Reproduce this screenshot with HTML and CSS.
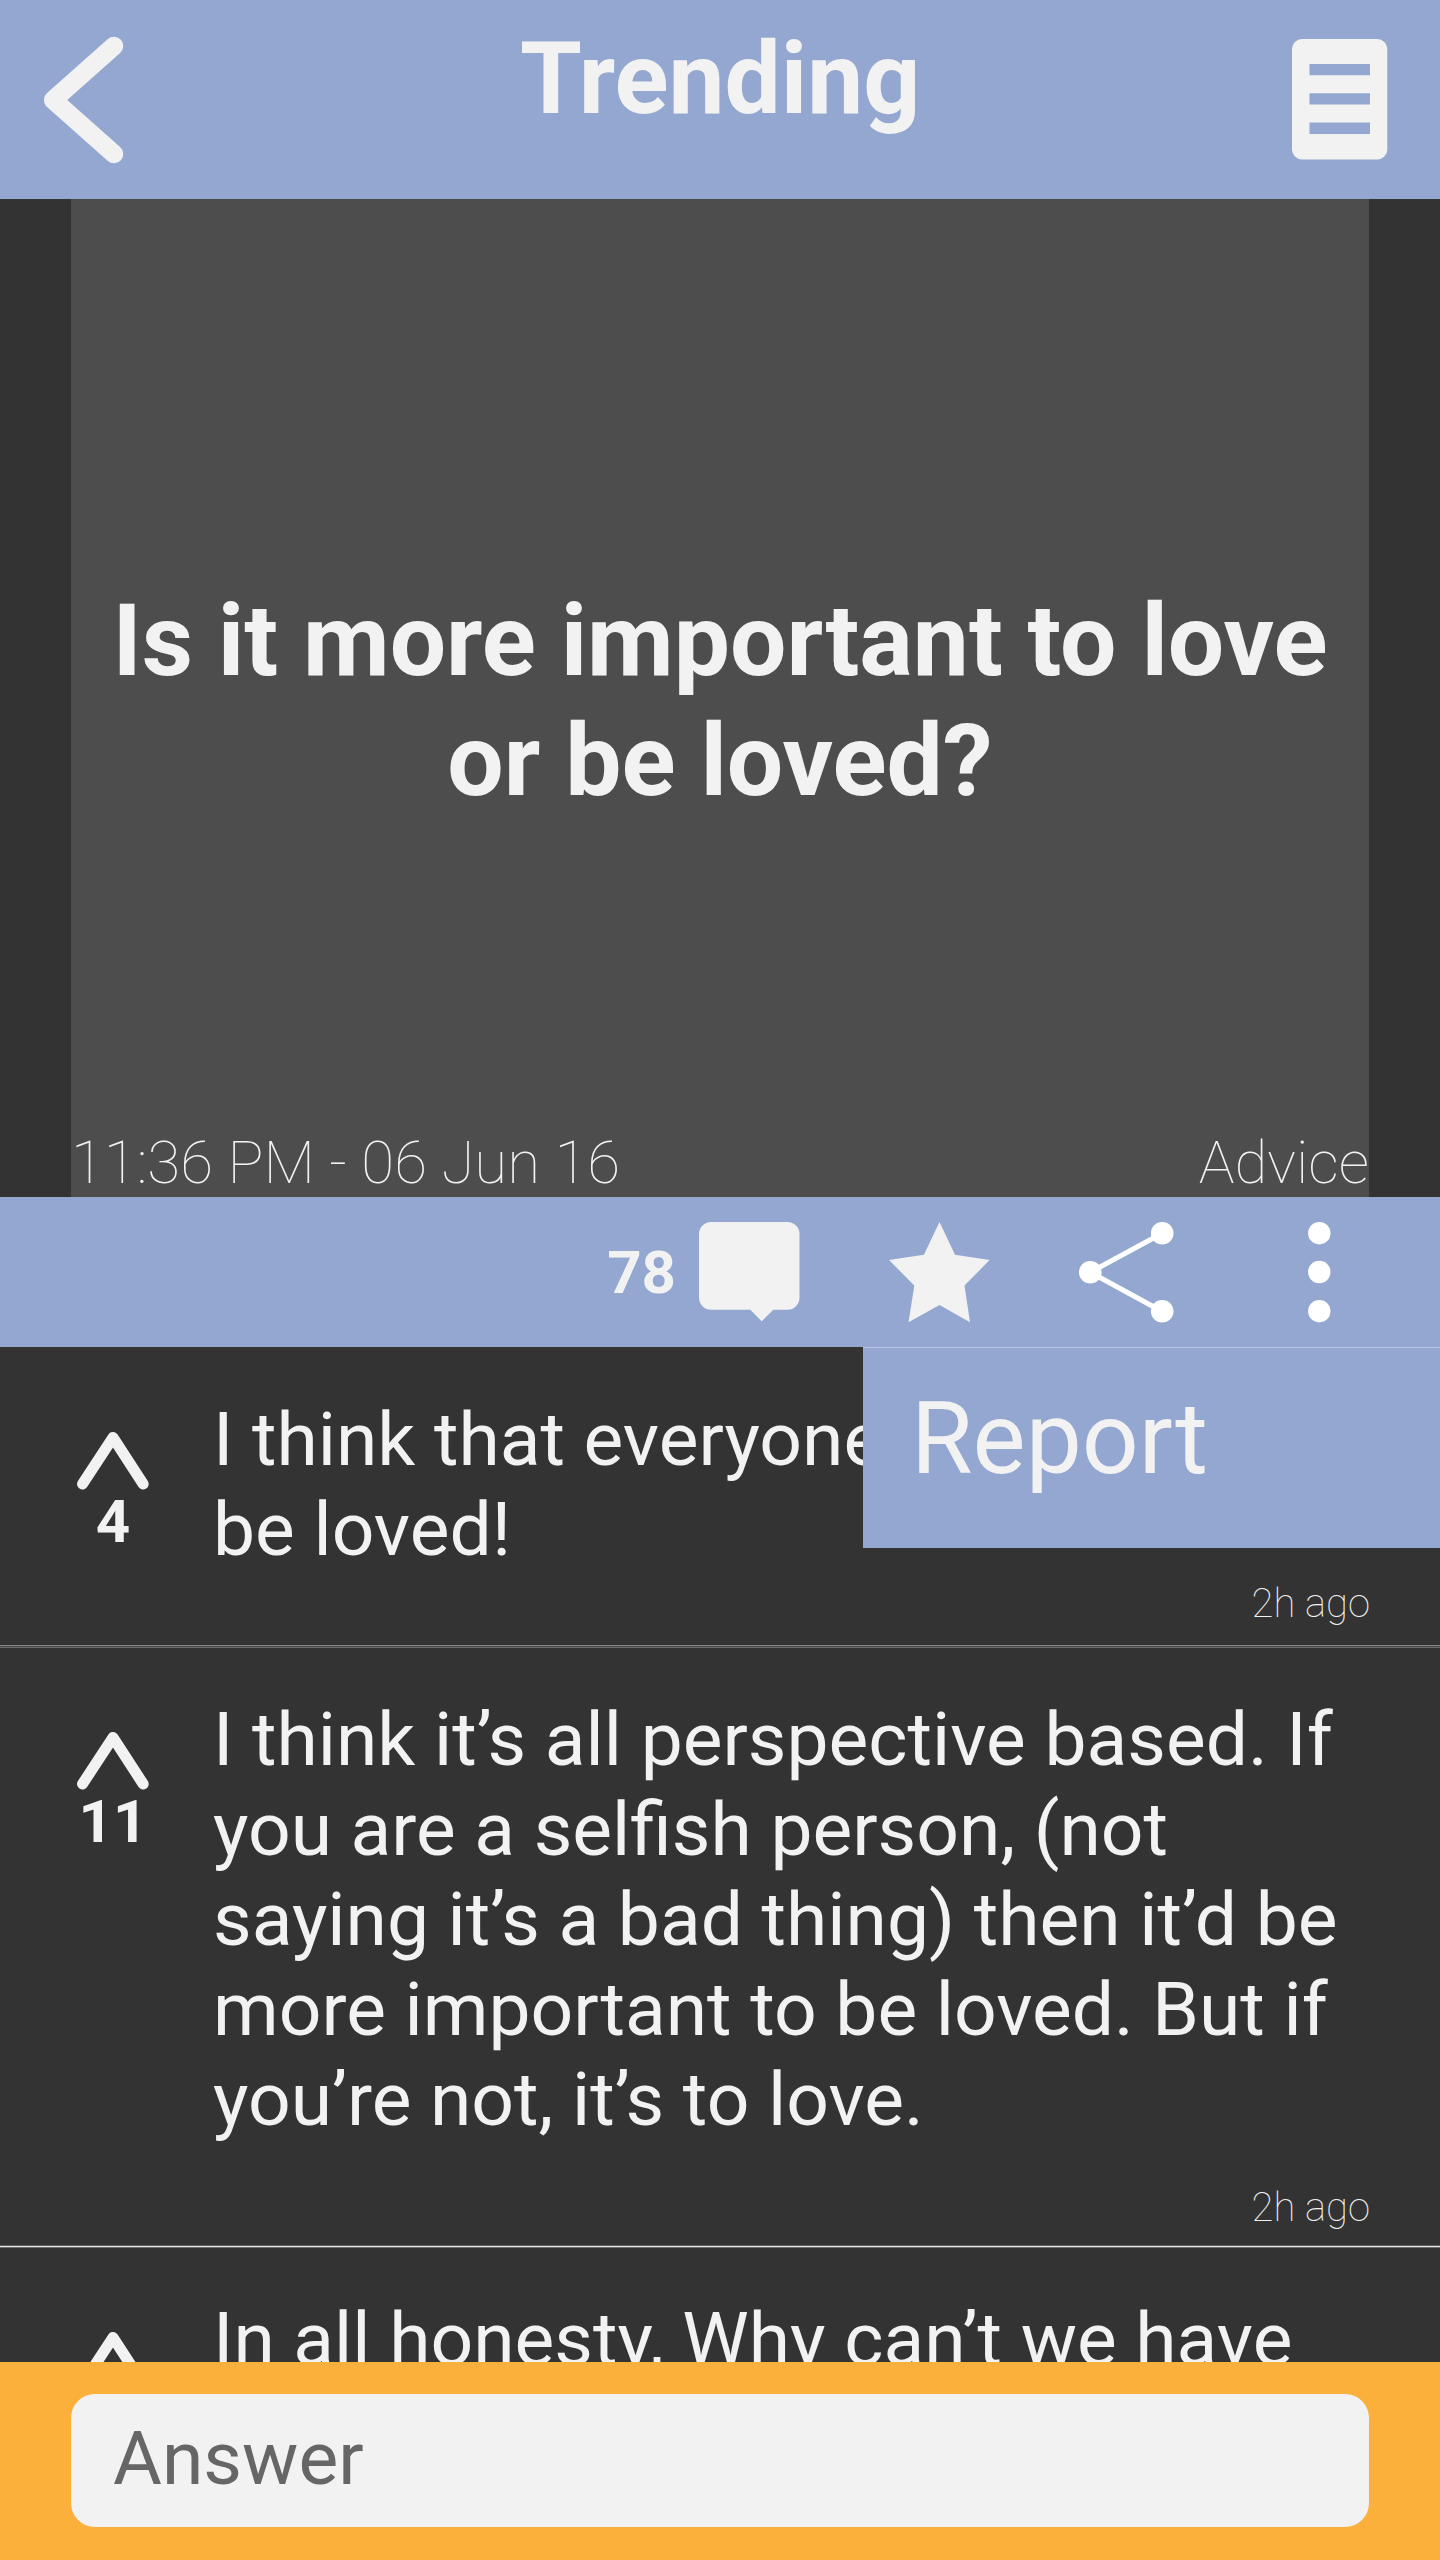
FILE: index.html
```
<!DOCTYPE html>
<html lang="en">
<head>
<meta charset="utf-8">
<title>Trending</title>
<link rel="stylesheet" href="styles.css">
</head>
<body>
<div class="screen">
  <header class="header">
    <svg class="back" viewBox="0 0 80 128" aria-label="Back"><path d="M70 10 9.200 64 70 118"/></svg>
    <h1 class="title">Trending</h1>
    <svg class="list-icon" viewBox="0 0 96 121" aria-label="Menu"><path fill-rule="evenodd" d="M10 0H85.300a10 10 0 0 1 10 10V110.400a10 10 0 0 1-10 10H10a10 10 0 0 1-10-10V10A10 10 0 0 1 10 0ZM17.500 25V36.200H78V25ZM17.500 54.200V65.600H78V54.200ZM17.500 83.500V95H78V83.500Z"/></svg>
  </header>

  <section class="question">
    <h2 class="question-text">Is it more important to love or be loved?</h2>
    <div class="meta"><span>11:36 PM - 06 Jun 16</span><span>Advice</span></div>
  </section>

  <nav class="toolbar">
    <span class="count">78</span>
    <svg class="icon bubble" viewBox="0 0 101 100"><path d="M12 0H88.500a12 12 0 0 1 12 12V75.700a12 12 0 0 1-12 12H74.300L62.700 99.200 51.300 87.700H12a12 12 0 0 1-12-12V12A12 12 0 0 1 12 0Z"/></svg>
    <svg class="icon star" viewBox="0 0 101 101"><path d="M50.500 0 66 32.700 100.700 38 75.500 63.500 81 100.300 50.500 83 19.500 100.300 25.300 63.500 0 38 34.900 32.700Z"/></svg>
    <svg class="icon share" viewBox="0 0 95 101"><path d="M83.300 11.200 11.200 50.300 83.300 89.500"/><circle cx="83.200" cy="11.300" r="11.300"/><circle cx="11.300" cy="50.300" r="11.300"/><circle cx="83.200" cy="89.300" r="11.300"/></svg>
    <svg class="icon more" viewBox="0 0 23 101"><circle cx="11.300" cy="11.200" r="11.200"/><circle cx="11.300" cy="50" r="11.200"/><circle cx="11.300" cy="89.200" r="11.200"/></svg>
    <div class="menu">Report</div>
  </nav>

  <main class="answers">
    <article class="answer answer-short">
      <div class="vote"><svg class="up" viewBox="0 0 72 58"><path d="M5.500 52 36 5.500 66.200 52"/></svg><span>4</span></div>
      <p class="text">I think that everyone<br>be loved!</p>
      <time class="time">2h ago</time>
    </article>
    <article class="answer answer-long">
      <div class="vote"><svg class="up" viewBox="0 0 72 58"><path d="M5.500 52 36 5.500 66.200 52"/></svg><span>11</span></div>
      <p class="text">I think it’s all perspective based. If<br>you are a selfish person, (not<br>saying it’s a bad thing) then it’d be<br>more important to be loved. But if<br>you’re not, it’s to love.</p>
      <time class="time">2h ago</time>
    </article>
    <article class="answer">
      <div class="vote"><svg class="up" viewBox="0 0 72 58"><path d="M5.500 52 36 5.500 66.200 52"/></svg></div>
      <p class="text">In all honesty, Why can’t we have</p>
    </article>
  </main>

  <footer class="composer"><div class="field">Answer</div></footer>
</div>
</body>
</html>
```
FILE: styles.css
```
* { box-sizing: border-box; }
body { margin: 0; background: #333; }
h1, h2, p { margin: 0; }
svg { display: block; overflow: visible; }

.screen {
  width: 1440px;
  height: 2560px;
  overflow: hidden;
  display: grid;
  grid-template-rows: 199px 998px 150px 1015px 198px;
  background: #333;
  color: #f2f2f2;
  font-family: Roboto, sans-serif;
}

.header {
  display: grid;
  grid-template-columns: 105px 1fr 96px;
  align-items: start;
  padding: 0 52.500px 0 44px;
  background: #93a7d1;
}
.back { width: 80px; height: 128px; margin-top: 36px; }
.back path { fill: none; stroke: #f2f2f2; stroke-width: 18.500px; stroke-linecap: round; stroke-linejoin: round; }
.title { margin-top: 19px; font-size: 100px; line-height: 120px; font-weight: 700; text-align: center; }
.list-icon { width: 96px; height: 121px; margin-top: 39px; fill: #f2f2f2; }

.question {
  display: flex;
  flex-direction: column;
  margin: 0 71px;
  padding-top: 382px;
  background: #4d4d4d;
}
.question-text { font-size: 100px; line-height: 120px; font-weight: 700; text-align: center; }
.meta { display: flex; justify-content: space-between; margin-top: auto; font-size: 60px; line-height: 69px; font-weight: 100; }

.toolbar { position: relative; display: flex; align-items: flex-start; padding: 25px 109px 0 0; justify-content: flex-end; background: #93a7d1; fill: #f2f2f2; }
.count { margin: 15px 23px 0 0; font-size: 60px; line-height: 72px; font-weight: 700; }
.bubble { width: 101px; height: 100px; margin-right: 89px; }
.star { width: 101px; height: 101px; margin-right: 89px; }
.share { width: 95px; height: 101px; margin-right: 134px; fill: #fff; }
.share path { fill: none; stroke: #fff; stroke-width: 5px; }
.more { width: 23px; height: 101px; fill: #fff; }
.menu {
  position: absolute;
  top: 150px;
  right: 0;
  z-index: 1;
  width: 577px;
  height: 201px;
  padding: 31px 48px 0;
  border-top: 1px solid #b5c5e4;
  background: #93a7d1;
  font-size: 100px;
  line-height: 120px;
}

.answers { overflow: hidden; }
.answer {
  display: grid;
  grid-template-columns: 226px 1fr;
  grid-template-rows: auto 1fr;
  padding: 46px 70px 0 0;
}
.answer-short {
  height: 301px;
  padding-top: 47px;
  padding-bottom: 20px;
  background: linear-gradient(#858585 0 1px, #4a4a4a 1px 2px, #6a6a6a 2px 3px) bottom / 100% 3px no-repeat;
}
.answer-long {
  height: 600px;
  padding-bottom: 16px;
  background: linear-gradient(#5f5f5f 0 1px, #e8e8e8 1px 2px, #707070 2px 3px) bottom / 100% 3px no-repeat;
}
.text { margin-left: -13px; font-size: 74.95px; line-height: 90px; white-space: nowrap; }
.vote { grid-row: 1 / 3; display: flex; flex-direction: column; align-items: center; padding-top: 38px; font-size: 60px; line-height: 72px; font-weight: 700; }
.up { flex: none; width: 72px; height: 58px; margin-bottom: -4px; }
.up path { fill: none; stroke: #f2f2f2; stroke-width: 11px; stroke-linecap: round; stroke-linejoin: round; }
.time { grid-column: 2; place-self: end; font-size: 40px; line-height: 48px; font-weight: 100; }

.composer { padding: 32px 71px 33px; background: #fbb03b; }
.field { height: 133px; padding: 19px 42px; border-radius: 24px; background: #f2f2f2; color: #666; font-size: 75px; line-height: 90px; }
```
